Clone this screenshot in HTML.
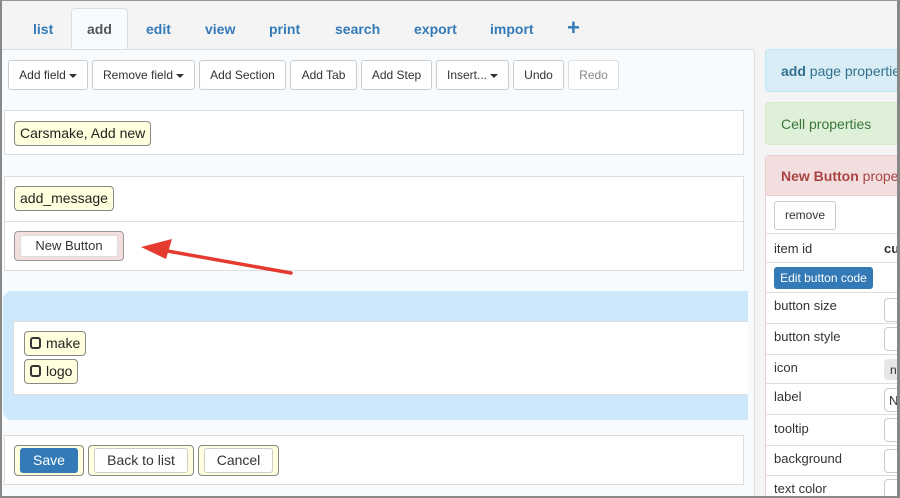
<!DOCTYPE html>
<html style="width:900px;height:498px;overflow:hidden"><head><meta charset="utf-8">
<style>
*{box-sizing:border-box;margin:0;padding:0}
body{width:900px;height:498px;overflow:hidden;background:#f4f4f4;font-family:"Liberation Sans",Arial,sans-serif;font-size:13px;color:#333;position:relative}
.a{position:absolute}
.frame{left:0;top:0;width:900px;height:498px;border-left:2px solid #888;border-right:3px solid #888;border-bottom:2px solid #888;border-top:1px solid #999;pointer-events:none;z-index:10}
.tab{top:21px;font-size:14px;font-weight:bold;color:#337ab7}
.btn{top:60px;height:30px;border:1px solid #ccc;border-radius:3px;background:#fff;font-size:12px;line-height:28px;text-align:center;color:#333}
.car{display:inline-block;width:0;height:0;border-left:4px solid transparent;border-right:4px solid transparent;border-top:4px solid #333;vertical-align:middle;margin-left:3px}
.row{left:4px;width:740px;background:#fff;border:1px solid #ddd}
.tag{background:#ffffdd;border:1px solid #888;border-radius:4px;font-size:14px;color:#222;padding:0 5px;line-height:23px}
.chk{display:inline-block;width:11px;height:12px;border:2.5px solid #333;border-radius:3px;vertical-align:-1px;margin-right:5px}
.prow{left:766px;width:140px;border-bottom:1px solid #ddd;font-size:13px;color:#333;padding-left:8px}
.inp{position:absolute;left:118px;width:40px;border:1px solid #ccc;border-radius:4px;background:#fff}
</style></head><body>
<div class="a frame"></div>
<div class="a" style="left:71px;top:8px;width:57px;height:42px;background:#f7fbfe;border:1px solid #ddd;border-bottom:none;border-radius:4px 4px 0 0"></div>
<div class="a tab" style="left:33px">list</div>
<div class="a tab" style="left:87px;color:#555">add</div>
<div class="a tab" style="left:146px">edit</div>
<div class="a tab" style="left:205px">view</div>
<div class="a tab" style="left:269px">print</div>
<div class="a tab" style="left:335px">search</div>
<div class="a tab" style="left:414px">export</div>
<div class="a tab" style="left:490px">import</div>
<div class="a" style="left:567px;top:15px;font-size:22px;font-weight:bold;color:#337ab7">+</div>
<div class="a" style="left:0;top:49px;width:755px;height:449px;background:#f7fbfe;border:1px solid #ddd;border-bottom:none;border-radius:0 4px 0 0"></div>
<div class="a btn" style="left:8px;width:80px">Add field<span class="car"></span></div>
<div class="a btn" style="left:92px;width:103px">Remove field<span class="car"></span></div>
<div class="a btn" style="left:199px;width:87px">Add Section</div>
<div class="a btn" style="left:290px;width:67px">Add Tab</div>
<div class="a btn" style="left:361px;width:71px">Add Step</div>
<div class="a btn" style="left:436px;width:73px">Insert...<span class="car"></span></div>
<div class="a btn" style="left:513px;width:51px">Undo</div>
<div class="a btn" style="left:568px;width:51px;color:#888;border-color:#ddd">Redo</div>

<div class="a row" style="top:110px;height:45px"></div>
<div class="a tag" style="left:14px;top:121px">Carsmake, Add new</div>

<div class="a row" style="top:176px;height:46px"></div>
<div class="a tag" style="left:14px;top:186px">add_message</div>
<div class="a row" style="top:221px;height:50px"></div>
<div class="a" style="left:14px;top:231px;width:110px;height:30px;background:#f2dede;border:1px solid #999;border-radius:4px"></div>
<div class="a" style="left:20px;top:235px;width:98px;height:22px;background:#fff;border:1px solid #ddd;border-radius:3px;font-size:13px;text-align:center;line-height:20px">New Button</div>
<svg class="a" style="left:138px;top:235px" width="160" height="45"><line x1="153" y1="38" x2="18" y2="14" stroke="#e53a2f" stroke-width="3.5" stroke-linecap="round"/><polygon points="3,12 34,4 28,24" fill="#e53a2f"/></svg>

<div class="a" style="left:3px;top:291px;width:745px;height:129px;background:#cde8fa;border-radius:9px 0 0 9px"></div>
<div class="a" style="left:13px;top:321px;width:735px;height:74px;background:#fff;border:1px solid #ddd;border-right:none"></div>
<div class="a tag" style="left:24px;top:331px"><span class="chk"></span>make</div>
<div class="a tag" style="left:24px;top:359px"><span class="chk"></span>logo</div>

<div class="a row" style="top:435px;height:50px"></div>
<div class="a" style="left:14px;top:445px;width:70px;height:31px;background:#ffffdd;border:1px solid #888;border-radius:4px"></div>
<div class="a" style="left:20px;top:448px;width:58px;height:25px;background:#337ab7;border-radius:3px;color:#fff;font-size:14px;text-align:center;line-height:25px">Save</div>
<div class="a" style="left:88px;top:445px;width:106px;height:31px;background:#ffffdd;border:1px solid #888;border-radius:4px"></div>
<div class="a" style="left:94px;top:448px;width:94px;height:25px;background:#fff;border:1px solid #ccc;border-radius:3px;font-size:14px;text-align:center;line-height:23px">Back to list</div>
<div class="a" style="left:198px;top:445px;width:81px;height:31px;background:#ffffdd;border:1px solid #888;border-radius:4px"></div>
<div class="a" style="left:204px;top:448px;width:69px;height:25px;background:#fff;border:1px solid #ccc;border-radius:3px;font-size:14px;text-align:center;line-height:23px">Cancel</div>

<div class="a" style="left:765px;top:49px;width:135px;height:43px;background:#d9edf7;border:1px solid #bce8f1;border-right:none;border-radius:4px 0 0 4px;color:#31708f;font-size:14px;padding:13px 0 0 15px;white-space:nowrap;overflow:hidden"><b>add</b> page properties</div>
<div class="a" style="left:765px;top:102px;width:135px;height:43px;background:#dff0d8;border:1px solid #d6e9c6;border-right:none;border-radius:4px 0 0 4px;color:#3c763d;font-size:14px;padding:13px 0 0 15px;white-space:nowrap;overflow:hidden">Cell properties</div>
<div class="a" style="left:765px;top:155px;width:135px;height:343px;background:#fff;border:1px solid #ebccd1;border-right:none;border-bottom:none;border-radius:4px 0 0 0"></div>
<div class="a" style="left:766px;top:156px;width:134px;height:40px;background:#f2dede;border-bottom:1px solid #ebccd1;color:#a94442;font-size:14px;padding:12px 0 0 15px;white-space:nowrap;overflow:hidden"><b>New Button</b> properties</div>
<div style="position:absolute;left:0;top:0;width:900px;height:498px;overflow:hidden">
<div class="a prow" style="top:196px;height:38px"><div class="a" style="left:8px;top:5px;width:62px;height:29px;border:1px solid #ccc;border-radius:3px;font-size:12px;text-align:center;line-height:27px">remove</div></div>
<div class="a prow" style="top:234px;height:29px;padding-top:7px">item id<b class="a" style="left:118px;top:7px">cu</b></div>
<div class="a prow" style="top:263px;height:30px"><div class="a" style="left:8px;top:4px;width:99px;height:22px;background:#337ab7;border-radius:3px;color:#fff;font-size:12px;text-align:center;line-height:22px">Edit button code</div></div>
<div class="a prow" style="top:293px;height:31px;padding-top:5px">button size<div class="inp" style="top:5px;height:24px"></div></div>
<div class="a prow" style="top:324px;height:31px;padding-top:5px">button style<div class="inp" style="top:3px;height:24px"></div></div>
<div class="a prow" style="top:355px;height:29px;padding-top:5px">icon<div class="inp" style="top:4px;height:21px;background:#e6e6e6;border-color:#e6e6e6;font-size:12px;padding:3px 0 0 5px;overflow:hidden">no</div></div>
<div class="a prow" style="top:384px;height:31px;padding-top:5px">label<div class="inp" style="top:4px;height:24px;font-size:13px;padding:4px 0 0 4px;overflow:hidden">N</div></div>
<div class="a prow" style="top:415px;height:31px;padding-top:6px">tooltip<div class="inp" style="top:3px;height:24px"></div></div>
<div class="a prow" style="top:446px;height:30px;padding-top:5px">background<div class="inp" style="top:3px;height:24px"></div></div>
<div class="a prow" style="top:476px;height:22px;padding-top:5px;border:none">text color<div class="inp" style="top:3px;height:24px"></div></div>
</div>
</body></html>
